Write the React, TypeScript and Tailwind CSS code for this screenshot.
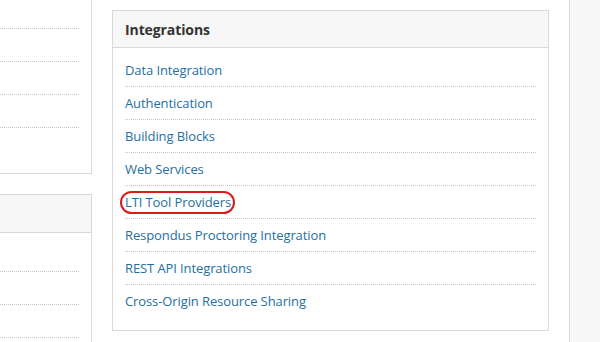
import React from "react";

const leftTop = ["", "", "", "", ""];
const leftBottom = ["", "", "", ""];

const links = [
  "Data Integration",
  "Authentication",
  "Building Blocks",
  "Web Services",
  "LTI Tool Providers",
  "Respondus Proctoring Integration",
  "REST API Integrations",
  "Cross-Origin Resource Sharing",
];

function Rows({ items, circled }: { items: string[]; circled?: string }) {
  return (
    <ul className="px-[12px] pt-[6px] pb-[12px]">
      {items.map((item, i) => (
        <li
          key={i}
          className={`h-[33px] pt-[1px] flex items-center ${
            i < items.length - 1 ? "border-b border-dotted border-[#c4c4c4]" : ""
          }`}
        >
          {item === circled ? (
            <span className="relative text-[#1f6fa1]">
              <span className="absolute -left-[5px] -right-[4px] -top-[2px] -bottom-[2px] rounded-full border-2 border-[#d91c1c]"></span>
              {item}
            </span>
          ) : (
            <a className="text-[#1f6fa1]" href="#">
              {item}
            </a>
          )}
        </li>
      ))}
    </ul>
  );
}

export default function App() {
  return (
    <div
      className="w-[600px] h-[342px] overflow-hidden bg-white flex text-[13px] tracking-[-0.1px]"
      style={{ fontFamily: '"Open Sans", "Noto Sans", sans-serif' }}
    >
      <div className="w-[92px] shrink-0">
        <div className="w-[112px] ml-[-20px] flex flex-col">
          <div className="mt-[-48px] border-r border-b border-[#d9d9d9]">
            <div className="h-[38px] bg-[#f7f7f7] border-b border-[#d9d9d9]"></div>
            <Rows items={leftTop} />
          </div>
          <div className="mt-[20px] border-t border-r border-[#d9d9d9]">
            <div className="h-[38px] bg-[#f7f7f7] border-b border-[#d9d9d9]"></div>
            <Rows items={leftBottom} />
          </div>
        </div>
      </div>
      <div className="ml-[20px] mt-[10px] w-[437px] h-[321px] shrink-0 border border-[#d9d9d9]">
        <div className="h-[37px] bg-[#f7f7f7] border-b border-[#d9d9d9] px-[12px] flex items-center">
          <h2 className="font-bold text-[14px] text-[#333333]">Integrations</h2>
        </div>
        <Rows items={links} circled="LTI Tool Providers" />
      </div>
      <div className="ml-[20px] flex-1 border-l border-[#d9d9d9] bg-[#f7f7f7]"></div>
    </div>
  );
}
